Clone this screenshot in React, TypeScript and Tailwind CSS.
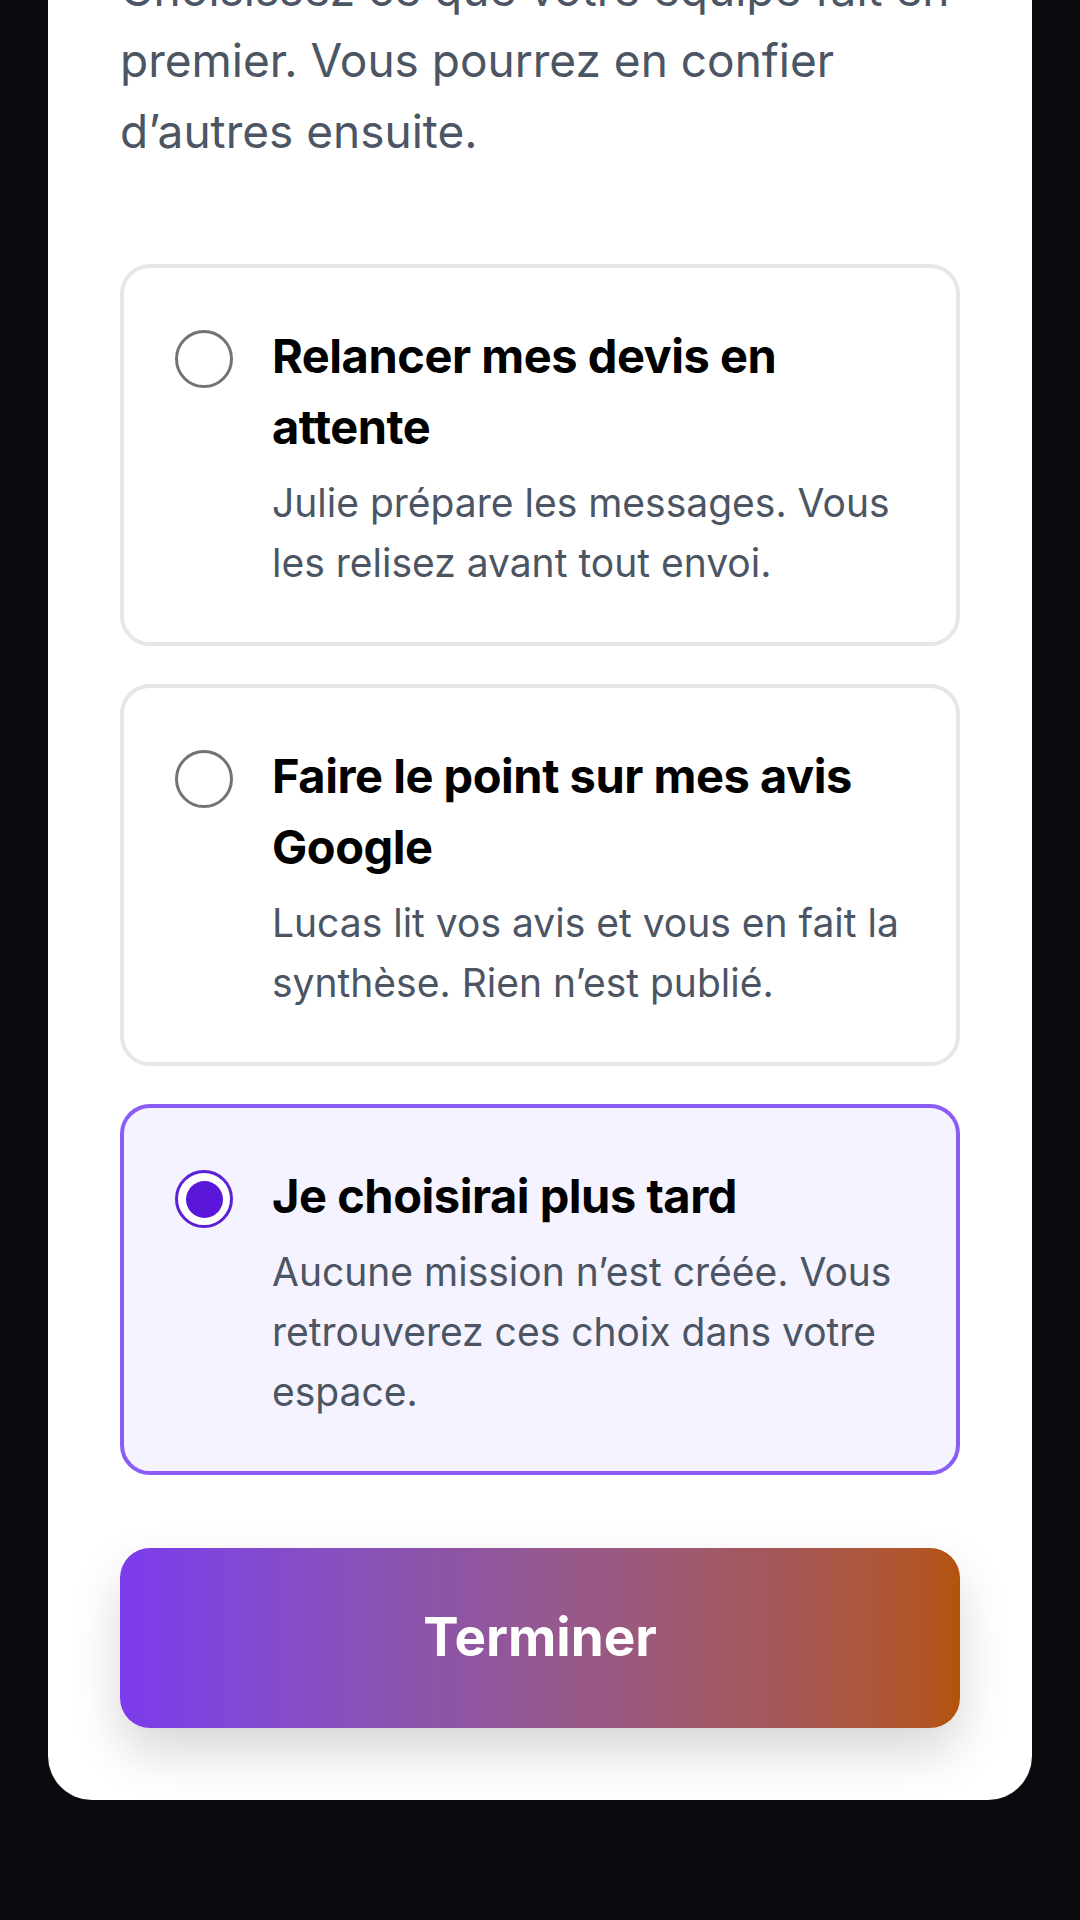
import React from 'react';

type Option = {
  id: string;
  title: string;
  desc: string;
};

const options: Option[] = [
  {
    id: 'devis',
    title: 'Relancer mes devis en attente',
    desc: 'Julie prépare les messages. Vous les relisez avant tout envoi.',
  },
  {
    id: 'avis',
    title: 'Faire le point sur mes avis Google',
    desc: 'Lucas lit vos avis et vous en fait la synthèse. Rien n’est publié.',
  },
  {
    id: 'plus-tard',
    title: 'Je choisirai plus tard',
    desc: 'Aucune mission n’est créée. Vous retrouverez ces choix dans votre espace.',
  },
];

export default function App() {
  const [selected, setSelected] = React.useState('plus-tard');

  return (
    <div
      className="min-h-screen bg-[#0a0a0f] px-12 pb-[121px] overflow-hidden"
      style={{ fontFamily: 'Inter, "Noto Sans", sans-serif' }}
    >
      <div className="-mt-[100px] bg-white rounded-[44px] px-[72px] pt-[54px] pb-[72px]">
        {/* Intro */}
        <p className="text-[46px] leading-[71px] text-[#4b5563]">
          Choisissez ce que votre équipe fait en premier. Vous pourrez en confier d’autres ensuite.
        </p>

        {/* Options */}
        <div className="mt-[97px] flex flex-col gap-[38px]">
          {options.map((o) => {
            const active = selected === o.id;
            return (
              <button
                key={o.id}
                type="button"
                onClick={() => setSelected(o.id)}
                className={`flex items-start gap-[39px] text-left rounded-[30px] border-4 pl-[51px] pr-[40px] pt-[52px] pb-[49px] ${
                  active ? 'border-[#8b5cf6] bg-[#f5f3ff]' : 'border-[#e5e7eb] bg-white'
                }`}
              >
                <span
                  className={`mt-[10px] w-[58px] h-[58px] shrink-0 rounded-full border-[3px] flex items-center justify-center ${
                    active ? 'border-[#5b21d9] bg-white' : 'border-[#737373] bg-white'
                  }`}
                >
                  {active && <span className="w-[37px] h-[37px] rounded-full bg-[#5b17d9]" />}
                </span>
                <span className="flex flex-col">
                  <span className="text-[47px] leading-[71px] font-bold text-black tracking-[-0.01em]">
                    {o.title}
                  </span>
                  <span className="mt-[11px] text-[39px] leading-[60px] text-[#4b5563]">
                    {o.desc}
                  </span>
                </span>
              </button>
            );
          })}
        </div>

        {/* Action */}
        <button
          type="button"
          className="mt-[73px] w-full h-[180px] rounded-[30px] bg-gradient-to-r from-[#7c3aed] to-[#b45309] text-white text-[53px] font-bold shadow-[0_24px_50px_rgba(0,0,0,0.16)]"
        >
          Terminer
        </button>
      </div>
    </div>
  );
}
